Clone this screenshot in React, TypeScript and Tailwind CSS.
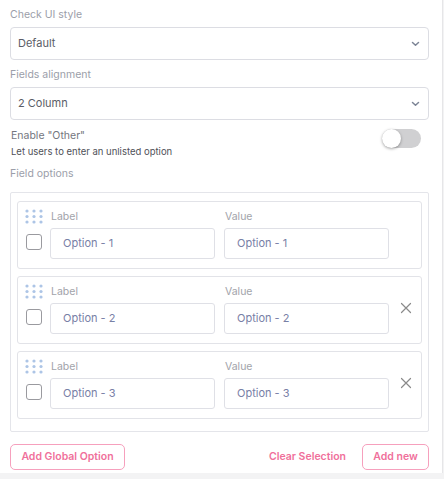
import React from "react";

function Dots() {
  return (
    <svg width="20" height="15" viewBox="0 0 20 15">
      {[0, 1, 2].map((r) =>
        [0, 1, 2].map((c) => (
          <circle key={`${r}-${c}`} cx={3 + c * 7} cy={2 + r * 5.5} r="1.6" fill="#adc5e6" />
        ))
      )}
    </svg>
  );
}

function XIcon() {
  return (
    <svg width="12" height="12" viewBox="0 0 12 12">
      <path d="M1.5 1.5 L10.5 10.5 M10.5 1.5 L1.5 10.5" stroke="#8a8a8a" strokeWidth="1.2" strokeLinecap="round" />
    </svg>
  );
}

function Chevron() {
  return (
    <svg width="9" height="6" viewBox="0 0 9 6">
      <path d="M1.5 1.5 L4.5 4.3 L7.5 1.5" stroke="#7d8596" strokeWidth="1.5" fill="none" strokeLinecap="round" strokeLinejoin="round" />
    </svg>
  );
}

function Select({ value }: { value: string }) {
  return (
    <div className="flex h-[33px] items-center justify-between rounded-[4px] border border-[#dcdde3] pl-[7px] pr-[8px]">
      <span className="text-[11px] text-[#5a5d66]">{value}</span>
      <Chevron />
    </div>
  );
}

function OptionCard({ n, removable }: { n: number; removable: boolean }) {
  return (
    <div className="flex h-[68px] rounded-[3px] border border-[#e2e3e8] pl-[6px] pt-[7px]">
      <div className="flex w-[26px] flex-col">
        <div className="h-[15px]">
          <Dots />
        </div>
        <div className="mt-[10px] ml-[2px] h-[16px] w-[16px] rounded-[3px] border-[1.5px] border-[#9a9a9f]" />
      </div>
      <div className="flex flex-col">
        <div className="flex h-[15px] items-center text-[10.5px] text-[#a2a3aa]">
          <span className="ml-[1px] w-[174px]">Label</span>
          <span>Value</span>
        </div>
        <div className="mt-[4px] flex gap-[9px]">
          <div className="flex h-[31px] w-[165px] items-center rounded-[3px] border border-[#dfe0e6] pl-[12px] text-[11px] text-[#7880a6]">
            Option - {n}
          </div>
          <div className="flex h-[31px] w-[165px] items-center rounded-[3px] border border-[#dfe0e6] pl-[12px] text-[11px] text-[#7880a6]">
            Option - {n}
          </div>
        </div>
      </div>
      <div className="flex flex-1 justify-center pt-[18px] pl-[1px]">
        {removable ? <XIcon /> : null}
      </div>
    </div>
  );
}

export default function App() {
  return (
    <div
      className="flex h-[479px] w-[444px] flex-col bg-[#f3f3f4]"
      style={{ fontFamily: "Inter, 'Noto Sans', sans-serif" }}
    >
      <div className="h-[473px] w-[443px] border-r border-[#e6e6e8] bg-white pl-[10px] pr-[13px] pt-[8px]">
        <div className="text-[10.5px] leading-[14px] text-[#9b9ea9]">Check UI style</div>
        <div className="mt-[5px]">
          <Select value="Default" />
        </div>
        <div className="mt-[8px] text-[10.5px] leading-[14px] text-[#9b9ea9]">Fields alignment</div>
        <div className="mt-[5px]">
          <Select value="2 Column" />
        </div>
        <div className="mt-[8px] flex items-start justify-between">
          <div className="pl-[1px]">
            <div className="text-[10.5px] leading-[15px] text-[#74767e]">Enable "Other"</div>
            <div className="mt-[2px] text-[9.5px] leading-[14px] text-[#4f5158]">Let users to enter an unlisted option</div>
          </div>
          <div className="mr-[8px] mt-[1px] flex h-[19px] w-[39px] items-center rounded-full bg-[#d0d0d2]">
            <div className="h-[19px] w-[19px] rounded-full bg-white shadow-[0_1px_3px_rgba(0,0,0,0.35)]" />
          </div>
        </div>
        <div className="mt-[8px] text-[10.5px] leading-[14px] text-[#9b9ea9]">Field options</div>
        <div className="mt-[11px] flex flex-col gap-[7px] rounded-[2px] border border-[#e4e5ea] px-[6px] pb-[12px] pt-[8px]">
          <OptionCard n={1} removable={false} />
          <OptionCard n={2} removable={true} />
          <OptionCard n={3} removable={true} />
        </div>
        <div className="mt-[12px] flex items-center">
          <button className="h-[26px] w-[115px] rounded-[5px] border border-[#f6a0bd] text-[10.5px] font-semibold text-[#f0709b]">
            Add Global Option
          </button>
          <div className="flex-1" />
          <button className="mr-[16px] text-[10.5px] font-semibold text-[#f0709b]">Clear Selection</button>
          <button className="h-[26px] w-[67px] rounded-[5px] border border-[#f6a0bd] text-[10.5px] font-semibold text-[#f0709b]">
            Add new
          </button>
        </div>
      </div>
    </div>
  );
}
